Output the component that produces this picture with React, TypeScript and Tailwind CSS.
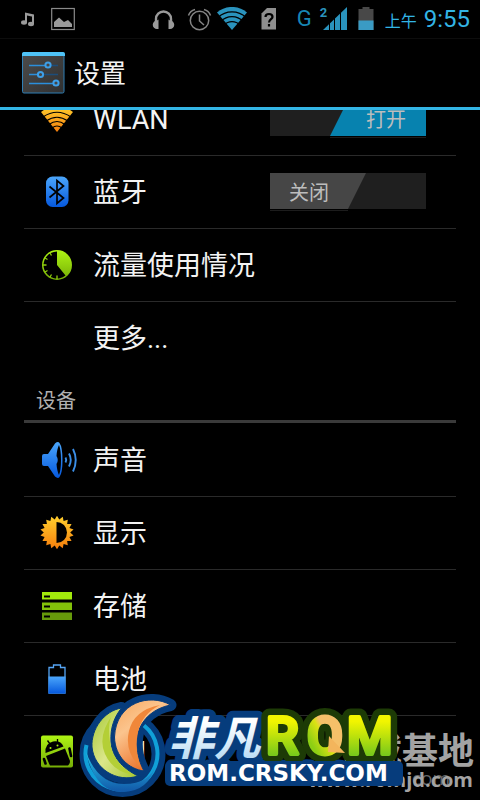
import React, { useState } from "react";

function StatusIcon({ box, className, children }: { box: string; className: string; children: React.ReactNode }) {
  return (
    <svg viewBox={box} className={`h-6 shrink-0 ${className}`} aria-hidden="true">
      {children}
    </svg>
  );
}

function StatusBar() {
  return (
    <header className="flex h-[39px] shrink-0 items-center border-b border-[#0d0d0d] pl-5 pr-[10px] text-[#33b5e5]">
      <StatusIcon box="20 7 16 24" className="w-4">
        <g fill="#9a9a9a">
          <path d="M25 12.500 34 14.500V17L27 15.500V23H25Z" />
          <rect x="32" y="15" width="2" height="9" />
          <ellipse cx="24" cy="22.500" rx="3" ry="2.200" />
          <ellipse cx="31" cy="24" rx="3" ry="2.200" />
        </g>
      </StatusIcon>
      <StatusIcon box="51 7 24 24" className="ml-[15px] w-6">
        <rect x="51.700" y="8.500" width="22.600" height="21" fill="none" stroke="#8a8a8a" strokeWidth="1.200" />
        <path d="M54 27V22L59 17.500 64 22 68 20 72 24V27Z" fill="#9a9a9a" />
      </StatusIcon>
      <div className="ml-auto flex items-center">
        <StatusIcon box="152 7 23 24" className="w-[23px]">
          <path d="M156 22V19A7.500 7.500 0 0 1 171 19V22" fill="none" stroke="#9a9a9a" strokeWidth="2.400" />
          <path d="M158.500 19.500V29H157A4 4 0 0 1 157 20.500ZM168.500 19.500V29H170A4 4 0 0 0 170 20.500Z" fill="#9a9a9a" />
        </StatusIcon>
        <StatusIcon box="187 7 25 24" className="ml-3 w-[25px]">
          <g fill="none" stroke="#858585" strokeWidth="1.500">
            <circle cx="199.500" cy="20.500" r="9.200" />
            <path d="M199.500 14.500V21L204 25M188.500 15.500A9 9 0 0 1 195 9.500M210.500 15.500A9 9 0 0 0 204 9.500" />
          </g>
        </StatusIcon>
        <StatusIcon box="217 7 30 24" className="ml-[5px] w-[30px]">
          <path d="M232 30 217 12.500A23 23 0 0 1 247 12.500Z" fill="#2a93bd" />
          <g fill="none" stroke="#000" strokeWidth="1.300">
            <path d="M218 17.500A20 20 0 0 1 246 17.500M221 21.500A15 15 0 0 1 243 21.500M224 25A11 11 0 0 1 240 25" />
          </g>
        </StatusIcon>
        <StatusIcon box="261 7 16 24" className="ml-[14px] w-4">
          <path d="M261.500 13.500 267 8H276V29.500H261.500Z" fill="#8f8f8f" />
          <path d="M265.500 17Q265.500 14 269 14 272.500 14 272.500 17C272.500 19 269 19.500 269 22.500M269 24V26.500" fill="none" stroke="#000" strokeWidth="2.200" />
        </StatusIcon>
        <span className="ml-5 text-[22px] leading-6 text-[#1786b4]">G</span>
        <div className="relative ml-2 h-6 w-[27px]">
          <StatusIcon box="319 7 27 24" className="w-[27px]">
            <path d="M322 30 346 7V30Z" fill="#2a93bd" />
            <path d="M328.500 7V30M333.500 7V30M339.500 7V30" stroke="#000" strokeWidth="1" />
          </StatusIcon>
          <span className="absolute left-0 top-0 text-[13px] font-bold leading-3 text-[#2a93bd]">2</span>
        </div>
        <StatusIcon box="357 7 16 24" className="ml-[11px] w-4">
          <path d="M357.500 9H361.500V7H368.500V9H372.500V30H357.500Z" fill="#484848" />
          <rect x="357.500" y="20.500" width="15" height="9.500" fill="#3a9bc4" />
        </StatusIcon>
        <span className="ml-[11px] flex items-baseline gap-[7px] pt-0.5">
          <span className="text-[16px] leading-6">上午</span>
          <time className="text-[24px] leading-6">9:55</time>
        </span>
      </div>
    </header>
  );
}

function SettingsIcon() {
  return (
    <svg viewBox="22 53 43 42" className="h-[42px] w-[43px]" aria-hidden="true">
      <defs>
        <linearGradient id="panel" x1="0" y1="0" x2="1" y2="1">
          <stop offset="0" stopColor="#4c4c4c" />
          <stop offset="1" stopColor="#303030" />
        </linearGradient>
      </defs>
      <rect x="22.500" y="53.500" width="41.500" height="40.500" rx="1.500" fill="url(#panel)" stroke="#2f7fb5" />
      <path d="M22 57V55Q22 53 24 53H63Q65 53 65 55V57Z" fill="#4fc3f7" />
      <g stroke="#2b8fdc" strokeWidth="1.300">
        <path d="M29 66.500H47M29 75.500H40M29 84.500H56" />
        <path d="M48 66.500H58M41 75.500H58" stroke="#1c4d7a" />
      </g>
      <g fill="#454545" stroke="#3d9fe8" strokeWidth="2">
        <circle cx="48" cy="66" r="2.600" />
        <circle cx="40.500" cy="75.500" r="2.600" />
        <circle cx="56" cy="84" r="2.600" />
      </g>
    </svg>
  );
}

function RowIcon({ box, children }: { box: string; children?: React.ReactNode }) {
  return (
    <svg viewBox={box} className="h-10 w-9 shrink-0 overflow-visible" aria-hidden="true">
      {children}
    </svg>
  );
}

function Gradients() {
  return (
    <svg className="absolute h-0 w-0" aria-hidden="true">
      <defs>
        <linearGradient id="amber" x1="0" y1="0" x2="0" y2="1">
          <stop offset="0" stopColor="#ffd02e" />
          <stop offset="1" stopColor="#f57d0c" />
        </linearGradient>
        <linearGradient id="blue" x1="0" y1="0" x2="0" y2="1">
          <stop offset="0" stopColor="#4ba6fb" />
          <stop offset="1" stopColor="#0558dd" />
        </linearGradient>
        <linearGradient id="lime" x1="0" y1="0" x2="0" y2="1">
          <stop offset="0" stopColor="#aef414" />
          <stop offset="1" stopColor="#76ae06" />
        </linearGradient>
      </defs>
    </svg>
  );
}

const icons = {
  wlan: (
    <RowIcon box="39 99 36 40">
      <path d="M57 132 41 112Q57 100 73 112Z" fill="url(#amber)" />
      <g fill="none" stroke="#000" strokeWidth="1.200">
        <path d="M43 117Q57 107.500 71 117M46 121Q57 113.500 68 121M49 124.500Q57 118.500 65 124.500M52 128Q57 124 62 128" />
      </g>
    </RowIcon>
  ),
  bluetooth: (
    <RowIcon box="39 172 36 40">
      <rect x="46" y="176.500" width="22.500" height="30.500" rx="6.500" fill="url(#blue)" />
      <path d="M49.500 186.500 63.500 198 57 203.500V180.500L63.500 186 49.500 197.500" fill="none" stroke="#000" strokeWidth="1.700" />
    </RowIcon>
  ),
  data: (
    <RowIcon box="39 245 36 40">
      <circle cx="57" cy="265" r="15" fill="url(#lime)" />
      <path d="M57 265V251.500A13.500 13.500 0 1 0 65.500 275.500Z" fill="#000" />
      <g stroke="#8fce0c" strokeWidth="1.300">
        <path d="M43 265H46.500M57 279V275.500M50 253 51.500 255.500M45 258 47.500 259.500M45 272 47.500 270.500M50 277 51.500 274.500" />
      </g>
    </RowIcon>
  ),
  sound: (
    <RowIcon box="39 440 36 40">
      <path d="M42 456Q42 454 44 454H48L55 443.500Q58 441 59.500 443 62.500 447 62.500 460T59.500 477Q58 479 55 476.500L48 466H44Q42 466 42 464Z" fill="url(#blue)" />
      <path d="M59 445Q61 450 61 460T59 475Q57 471 56.500 464 59 460 56.500 456 57 449 59 445Z" fill="#000" />
      <g fill="none" stroke="#3b8fe8" strokeWidth="1.900">
        <path d="M65.500 457.500Q67 460 65.500 462.500M69 453.500Q72.500 460 69 466.500M73 449Q78.500 460 73 471.500" />
      </g>
    </RowIcon>
  ),
  display: (
    <RowIcon box="39 513 36 40">
      <polygon
        points={Array.from({ length: 36 }, (_, i) => {
          const r = i % 2 ? 13.2 : 16.8;
          const a = (i * Math.PI) / 18 - Math.PI / 2;
          return `${57 + r * Math.cos(a)},${532.5 + r * Math.sin(a)}`;
        }).join(" ")}
        fill="url(#amber)"
      />
      <path d="M56.500 522A10.500 10.500 0 0 1 56.500 543Z" fill="#000" />
    </RowIcon>
  ),
  storage: (
    <RowIcon box="39 586 36 40">
      <rect x="42" y="592" width="30" height="7.500" fill="#a2ea0c" />
      <rect x="42" y="602.500" width="30" height="7.500" fill="#83c20a" />
      <rect x="42" y="612.500" width="30" height="7.500" fill="#669a0b" />
      <path d="M44 596.500H50M44 606.500H50M44 616.500H50" stroke="#000" strokeWidth="1.800" />
    </RowIcon>
  ),
  battery: (
    <RowIcon box="39 659 36 40">
      <path d="M49 667.500H53.500V665H60.500V667.500H65V693H49Z" fill="#000" stroke="#55a5f5" strokeWidth="1.300" />
      <rect x="48.500" y="676.500" width="17" height="17" fill="url(#blue)" />
    </RowIcon>
  ),
  apps: (
    <RowIcon box="39 732 36 40">
      <rect x="41" y="735.500" width="32" height="32" rx="2" fill="url(#lime)" />
      <path d="M45.500 753Q44.500 743.500 53 741.500 61 740.500 63.500 746.500Z" />
      <path d="M50 744 47.500 740.500M57.500 742 57.500 739" stroke="#000" strokeWidth="1.300" />
      <path d="M46 756 65 748.500 70 761Q70 764 68 765.500H50Q49 764 46 756Z" />
      <path d="M44 759 45.500 763.500M69.500 748.500 71 756" stroke="#000" strokeWidth="2.600" strokeLinecap="round" />
      <circle cx="50.500" cy="748" r="1" fill="#a8e80e" />
      <circle cx="57.500" cy="745.500" r="1" fill="#a8e80e" />
    </RowIcon>
  ),
};

function Toggle({ id, initial }: { id: string; initial: boolean }) {
  const [on, setOn] = useState(initial);
  return (
    <label className="relative ml-auto block h-[38px] w-[156px] cursor-pointer text-[20px] leading-10 text-[#bdbdbd]">
      <input id={id} type="checkbox" role="switch" aria-labelledby={`${id}-label`} checked={on} onChange={() => setOn(!on)} className="peer sr-only" />
      <svg viewBox="0 0 156 38" className="absolute inset-0 h-full w-full" aria-hidden="true">
        <rect width="156" height="36" fill="#1f1f1f" />
        {on ? (
          <>
            <path d="M78 0H156V36H60Z" fill="#0782af" />
            <path d="M60 38H156" stroke="#1c1c1c" strokeWidth="2" />
          </>
        ) : (
          <>
            <path d="M0 0H96L78 36H0Z" fill="#464646" />
            <path d="M0 38H78" stroke="#1c1c1c" strokeWidth="2" />
          </>
        )}
      </svg>
      <span className={on ? "relative block pl-[96px]" : "relative block pl-[19px]"}>{on ? "打开" : "关闭"}</span>
    </label>
  );
}

function Row({ id, label, icon, toggle, last }: { id: string; label: string; icon?: React.ReactNode; toggle?: boolean; last?: boolean }) {
  return (
    <li className={`flex h-[73px] items-center gap-[18px] border-b pl-[15px] pr-[30px] ${last ? "border-transparent" : "border-[#2a2a2a]"}`}>
      {icon ?? <span className="w-9 shrink-0" />}
      {toggle === undefined ? (
        <button type="button" className="flex-1 pt-0.5 text-left">{label}</button>
      ) : (
        <>
          <span id={`${id}-label`} className="pt-0.5">{label}</span>
          <Toggle id={id} initial={toggle} />
        </>
      )}
    </li>
  );
}

function Watermark() {
  const cjk = "font-['Noto_Sans_CJK_SC',sans-serif] font-bold";
  const letters = "font-['Roboto',sans-serif] font-medium text-[52px]";
  const green = "M121.500 708C104 711 91 729 92 747 94 769 117 783 138 776 122 768 112 757 111 742 110 727 115 716 121.500 708Z";
  const orange = "M170.500 705C150 693 116 702 114.500 737 115 757 129 769 144 771 138 760 135 746 138 733 142 718 155 708 170.500 705Z";
  return (
    <svg viewBox="70 690 410 110" className="pointer-events-none absolute bottom-0 right-0 h-[110px] w-[410px]" role="img" aria-label="非凡ROM ROM.CRSKY.COM">
      <defs>
        <linearGradient id="ice" x1="0" y1="0" x2="0" y2="1">
          <stop offset="0.300" stopColor="#fff" />
          <stop offset="1" stopColor="#a9d4f2" />
        </linearGradient>
        <linearGradient id="acid" x1="0" y1="0" x2="0" y2="1">
          <stop offset="0.250" stopColor="#f2f500" />
          <stop offset="0.800" stopColor="#79c91b" />
        </linearGradient>
        <linearGradient id="turn" x1="0" y1="1" x2="1" y2="0">
          <stop offset="0.250" stopColor="#8ccf14" />
          <stop offset="0.480" stopColor="#dbe213" />
          <stop offset="0.560" stopColor="#f5c069" />
        </linearGradient>
        <linearGradient id="leaf" x1="0" y1="0" x2="1" y2="1">
          <stop offset="0" stopColor="#a5c832" />
          <stop offset="0.500" stopColor="#dbe68a" />
          <stop offset="1" stopColor="#a5c832" />
        </linearGradient>
        <linearGradient id="peach" x1="0" y1="0" x2="0.600" y2="1">
          <stop offset="0" stopColor="#f8a65c" />
          <stop offset="0.400" stopColor="#fbc48d" />
          <stop offset="1" stopColor="#ea6a20" />
        </linearGradient>
        <linearGradient id="sea" x1="0" y1="0" x2="0" y2="1">
          <stop offset="0" stopColor="#25c4e8" />
          <stop offset="1" stopColor="#1257a8" />
        </linearGradient>
      </defs>

      <g textAnchor="end" fill="#a3a3a3">
        <text x="474" y="764" className={`${cjk} text-[36px]`}>下载基地</text>
        <text x="450" y="785" className="font-['Open_Sans',sans-serif] text-[19px]" fill="#666">.com</text>
        <text x="473" y="787" className="font-['Open_Sans',sans-serif] text-[20px] font-bold">www.romjd.com</text>
      </g>

      <g stroke="#063c7c" strokeWidth="12" strokeLinejoin="round" fill="#063c7c">
        <path d={green} />
        <path d={orange} />
        <circle cx="122.500" cy="754" r="36" fill="none" strokeWidth="14" />
        <text x="168" y="755" className={`${cjk} text-[46px] italic`} strokeWidth="14">非凡</text>
        <text x="169" y="781" className="font-['DejaVu_Sans',sans-serif] text-[23px] font-bold" strokeWidth="9">ROM.CRSKY.COM</text>
      </g>
      <g fill="#1d3b06" stroke="#1d3b06" strokeWidth="17" strokeLinejoin="round">
        <text x="266" y="754" className={letters}>R</text>
        <text x="307" y="754" className={letters}>O</text>
        <text x="347" y="754" className={letters}>M</text>
      </g>
      <rect x="165" y="761" width="238" height="25" rx="5" fill="#063c7c" />

      <path d="M144 725.500A36 36 0 1 1 86.500 745" fill="none" stroke="#10a0d8" strokeWidth="4" />
      <path d="M86 752Q98 784 124 784T156 764Q149 792 122 792T86 752Z" fill="url(#sea)" />
      <path d={green} fill="url(#leaf)" stroke="#063c7c" strokeWidth="1" />
      <path d="M113 714Q97 736 105 754T134 775Q113 763 110 742T113 714Z" fill="#b4cf36" />
      <path d={orange} fill="url(#peach)" stroke="#063c7c" strokeWidth="1" />
      <path d="M160 705Q134 710 129 731T141 768Q134 750 138 732T160 705Z" fill="#f0873a" />

      <text x="168" y="755" className={`${cjk} text-[46px] italic`} fill="url(#ice)">非凡</text>
      <text x="169" y="781" className="font-['DejaVu_Sans',sans-serif] text-[23px] font-bold" fill="#fff">ROM.CRSKY.COM</text>
      <g strokeLinejoin="round" strokeWidth="4">
        <text x="266" y="754" className={letters} fill="url(#acid)" stroke="url(#acid)">R</text>
        <text x="307" y="754" className={letters} fill="url(#turn)" stroke="url(#turn)">O</text>
        <text x="347" y="754" className={letters} fill="url(#acid)" stroke="url(#acid)">M</text>
      </g>
      <path d="M329 736 345 753 328 752Z" fill="#f3b55c" />
    </svg>
  );
}

export default function App() {
  return (
    <div className="relative flex h-screen flex-col overflow-hidden bg-black font-['Roboto','Noto_Sans_CJK_SC',sans-serif] text-[#f3f3f3]">
      <Gradients />
      <StatusBar />
      <div className="flex h-[71px] shrink-0 items-center gap-[9px] border-b-[3px] border-[#33b5e5] pl-[22px]">
        <SettingsIcon />
        <h1 className="pt-0.5 text-[26px] leading-8">设置</h1>
      </div>
      <main className="min-h-0 flex-1 overflow-hidden px-6 text-[27px] leading-9">
        <ul className="-mt-[27px]">
          <Row id="wlan" label="WLAN" icon={icons.wlan} toggle={true} />
          <Row id="bluetooth" label="蓝牙" icon={icons.bluetooth} toggle={false} />
          <Row id="data" label="流量使用情况" icon={icons.data} />
          <Row id="more" label="更多..." last />
        </ul>
        <h2 className="mb-px flex h-12 items-center border-b-[3px] border-[#3a3a3a] pl-3 pt-1.5 text-[20px] leading-6 text-[#b0b0b0]">设备</h2>
        <ul>
          <Row id="sound" label="声音" icon={icons.sound} />
          <Row id="display" label="显示" icon={icons.display} />
          <Row id="storage" label="存储" icon={icons.storage} />
          <Row id="battery" label="电池" icon={icons.battery} />
          <Row id="apps" label="应用" icon={icons.apps} last />
        </ul>
      </main>
      <Watermark />
    </div>
  );
}
